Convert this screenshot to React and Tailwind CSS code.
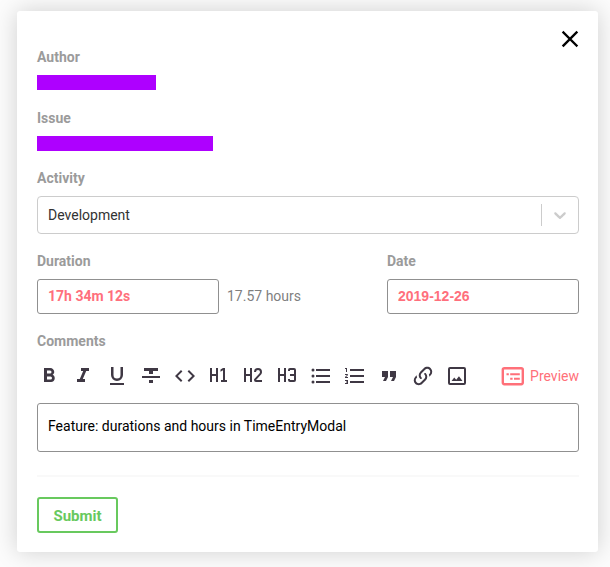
import React from "react";

const tools = [
  ["Bold", "M13.5,15.5H10V12.5H13.5A1.5,1.5 0 0,1 15,14A1.5,1.5 0 0,1 13.5,15.5M10,6.5H13A1.5,1.5 0 0,1 14.5,8A1.5,1.5 0 0,1 13,9.5H10M15.6,10.79C16.57,10.11 17.25,9 17.25,8C17.25,5.74 15.5,4 13.25,4H7V18H14.04C16.14,18 17.75,16.3 17.75,14.21C17.75,12.69 16.89,11.39 15.6,10.79Z"],
  ["Italic", "M10,4V7H12.21L8.79,15H6V18H14V15H11.79L15.21,7H18V4H10Z"],
  ["Underline", "M5,21H19V19H5V21M12,17A6,6 0 0,0 18,11V3H15.5V11A3.5,3.5 0 0,1 12,14.5A3.5,3.5 0 0,1 8.5,11V3H6V11A6,6 0 0,0 12,17Z"],
  ["Strikethrough", "M3,14H21V12H3M5,4V7H10V10H14V7H19V4M10,19H14V16H10V19Z"],
  ["Code", "M14.6,16.6L19.2,12L14.6,7.4L16,6L22,12L16,18L14.6,16.6M9.4,16.6L4.8,12L9.4,7.4L8,6L2,12L8,18L9.4,16.6Z"],
  ["Heading 1", "M3,4H5V10H9V4H11V18H9V12H5V18H3V4M14,18V16H16V6.31L13.5,7.75V5.44L16,4H18V16H20V18H14Z"],
  ["Heading 2", "M3,4H5V10H9V4H11V18H9V12H5V18H3V4M21,18H15A2,2 0 0,1 13,16C13,15.47 13.2,15 13.54,14.64L18.41,9.41C18.78,9.05 19,8.55 19,8A2,2 0 0,0 17,6A2,2 0 0,0 15,8H13A4,4 0 0,1 17,4A4,4 0 0,1 21,8C21,9.1 20.55,10.1 19.83,10.83L15,16H21V18Z"],
  ["Heading 3", "M3,4H5V10H9V4H11V18H9V12H5V18H3V4M15,4H19A2,2 0 0,1 21,6V16A2,2 0 0,1 19,18H15A2,2 0 0,1 13,16V15H15V16H19V12H15V10H19V6H15V7H13V6A2,2 0 0,1 15,4Z"],
  ["Bulleted list", "M7,5H21V7H7V5M7,13V11H21V13H7M4,4.5A1.5,1.5 0 0,1 5.5,6A1.5,1.5 0 0,1 4,7.5A1.5,1.5 0 0,1 2.5,6A1.5,1.5 0 0,1 4,4.5M4,10.5A1.5,1.5 0 0,1 5.5,12A1.5,1.5 0 0,1 4,13.5A1.5,1.5 0 0,1 2.5,12A1.5,1.5 0 0,1 4,10.5M7,19V17H21V19H7M4,16.5A1.5,1.5 0 0,1 5.5,18A1.5,1.5 0 0,1 4,19.5A1.5,1.5 0 0,1 2.5,18A1.5,1.5 0 0,1 4,16.5Z"],
  ["Numbered list", "M7,13V11H21V13H7M7,19V17H21V19H7M7,7V5H21V7H7M3,8V5H2V4H4V8H3M2,17V16H5V20H2V19H4V18.5H3V17.5H4V17H2M4.25,10A0.75,0.75 0 0,1 5,10.75C5,10.95 4.92,11.14 4.79,11.27L3.12,13H5V14H2V13.08L4,11H2V10H4.25Z"],
  ["Quote", "M14,17H17L19,13V7H13V13H16M6,17H9L11,13V7H5V13H8L6,17Z"],
  ["Link", "M10.59,13.41C11,13.8 11,14.44 10.59,14.83C10.2,15.22 9.56,15.22 9.17,14.83C7.22,12.88 7.22,9.71 9.17,7.76L12.71,4.22C14.66,2.27 17.83,2.27 19.78,4.22C21.73,6.17 21.73,9.34 19.78,11.29L18.29,12.78C18.3,11.96 18.17,11.14 17.89,10.36L18.36,9.88C19.54,8.71 19.54,6.81 18.36,5.64C17.19,4.46 15.29,4.46 14.12,5.64L10.59,9.17C9.41,10.34 9.41,12.24 10.59,13.41M13.41,9.17C13.8,8.78 14.44,8.78 14.83,9.17C16.78,11.12 16.78,14.29 14.83,16.24L11.29,19.78C9.34,21.73 6.17,21.73 4.22,19.78C2.27,17.83 2.27,14.66 4.22,12.71L5.71,11.22C5.7,12.04 5.83,12.86 6.11,13.65L5.64,14.12C4.46,15.29 4.46,17.19 5.64,18.36C6.81,19.54 8.71,19.54 9.88,18.36L13.41,14.83C14.59,13.66 14.59,11.76 13.41,10.59C13,10.2 13,9.56 13.41,9.17Z"],
  ["Image", "M19,19H5V5H19M19,3H5A2,2 0 0,0 3,5V19A2,2 0 0,0 5,21H19A2,2 0 0,0 21,19V5A2,2 0 0,0 19,3M13.96,12.29L11.21,15.83L9.25,13.47L6.5,17H17.5L13.96,12.29Z"],
];

const labelStyle = "block text-sm leading-4 font-bold text-[#9b9b9b]";
const fieldStyle =
  "h-[35px] w-full rounded-[3px] border border-[#909090] bg-white px-2.5 pb-0.5 text-sm font-bold text-[#ff6f7c] outline-none";

function Icon({ path }) {
  return (
    <svg viewBox="0 0 24 24" className="size-6 shrink-0 fill-current" aria-hidden="true">
      <path d={path} />
    </svg>
  );
}

export default function App() {
  return (
    <main className="min-h-screen bg-[#fcfcfc] pt-[11px] pr-3 pb-[15px] pl-[17px] font-[Roboto,sans-serif] text-sm">
      <form
        onSubmit={(e) => e.preventDefault()}
        className="relative rounded-[3px] bg-white pt-[38px] pr-[19px] pb-[19px] pl-5 shadow-[0_0_24px_rgba(0,0,0,0.18)]"
      >
        <button type="button" aria-label="Close" className="absolute top-4 right-4">
          <svg viewBox="0 0 24 24" className="size-6" fill="none" stroke="#000" strokeWidth="2.4" strokeLinecap="square" aria-hidden="true">
            <path d="M5.5 5.5 18.5 18.5M18.5 5.5 5.5 18.5" />
          </svg>
        </button>

        <div className={labelStyle}>Author</div>
        <div className="mt-2.5 h-[15px] w-[119px] bg-[#ae00ff]" />

        <div className={`${labelStyle} mt-5`}>Issue</div>
        <div className="mt-2.5 h-[15px] w-44 bg-[#ae00ff]" />

        <label htmlFor="activity" className={`${labelStyle} mt-[19px]`}>Activity</label>
        <div className="relative mt-2.5">
          <select
            id="activity"
            className="h-[38px] w-full appearance-none rounded-[4px] border border-[#cccccc] bg-white px-2.5 text-sm text-[#333333] outline-none"
          >
            <option>Development</option>
          </select>
          <div className="pointer-events-none absolute inset-y-2 right-0 flex w-[38px] items-center border-l border-[#cccccc] pl-2 text-[#cccccc]">
            <svg viewBox="0 0 20 20" className="size-5 fill-current" aria-hidden="true">
              <path d="M4.516 7.548c0.436-0.446 1.043-0.481 1.576 0l3.908 3.747 3.908-3.747c0.533-0.481 1.141-0.446 1.574 0 0.436 0.445 0.408 1.197 0 1.615-0.406 0.418-4.695 4.502-4.695 4.502-0.217 0.223-0.502 0.335-0.787 0.335s-0.57-0.112-0.789-0.335c0 0-4.287-4.084-4.695-4.502s-0.436-1.17 0-1.615z" />
            </svg>
          </div>
        </div>

        <div className="mt-[19px] flex justify-between">
          <div>
            <label htmlFor="duration" className={labelStyle}>Duration</label>
            <div className="mt-2.5 flex items-center gap-2">
              <div className="w-[182px]">
                <input id="duration" className={fieldStyle} defaultValue="17h 34m 12s" />
              </div>
              <span className="pb-0.5 text-[#7f7f7f]">17.57 hours</span>
            </div>
          </div>
          <div className="w-48">
            <label htmlFor="date" className={labelStyle}>Date</label>
            <div className="mt-2.5 font-['Liberation_Sans',Arial,sans-serif]">
              <input id="date" className={fieldStyle} defaultValue="2019-12-26" />
            </div>
          </div>
        </div>

        <label htmlFor="comments" className={`${labelStyle} mt-[19px]`}>Comments</label>
        <div className="mt-[15px] flex items-center justify-between">
          <div className="flex gap-2.5 text-[#3f3844]">
            {tools.map(([name, path]) => (
              <button key={name} type="button" aria-label={name}>
                <Icon path={path} />
              </button>
            ))}
          </div>
          <button type="button" className="flex items-center gap-[5px] text-[#ff7079]">
            <svg viewBox="0 0 24 24" className="size-6 shrink-0" aria-hidden="true">
              <rect x="1.8" y="4.2" width="20" height="16" rx="1.6" fill="none" stroke="currentColor" strokeWidth="2.4" />
              <path className="fill-current" d="M5.5 9.2H7.8V11.2H5.5ZM9.2 9.2H18.8V11.2H9.2ZM9.2 13.7H11.6V15.7H9.2ZM13 13.7H18.8V15.7H13Z" />
            </svg>
            Preview
          </button>
        </div>
        <textarea
          id="comments"
          className="mt-[15px] block h-[49px] w-full resize-none rounded-[3px] border border-[#909090] bg-white px-2.5 py-3 text-sm text-black outline-none"
          defaultValue="Feature: durations and hours in TimeEntryModal"
        />

        <hr className="mt-[23px] border-t-2 border-[#f9f9f9]" />
        <button
          type="submit"
          className="mt-5 h-9 w-[81px] rounded-[3px] border-2 border-[#68c95e] pt-0.5 text-[15px] leading-5 font-bold text-[#68c95e]"
        >
          Submit
        </button>
      </form>
    </main>
  );
}
